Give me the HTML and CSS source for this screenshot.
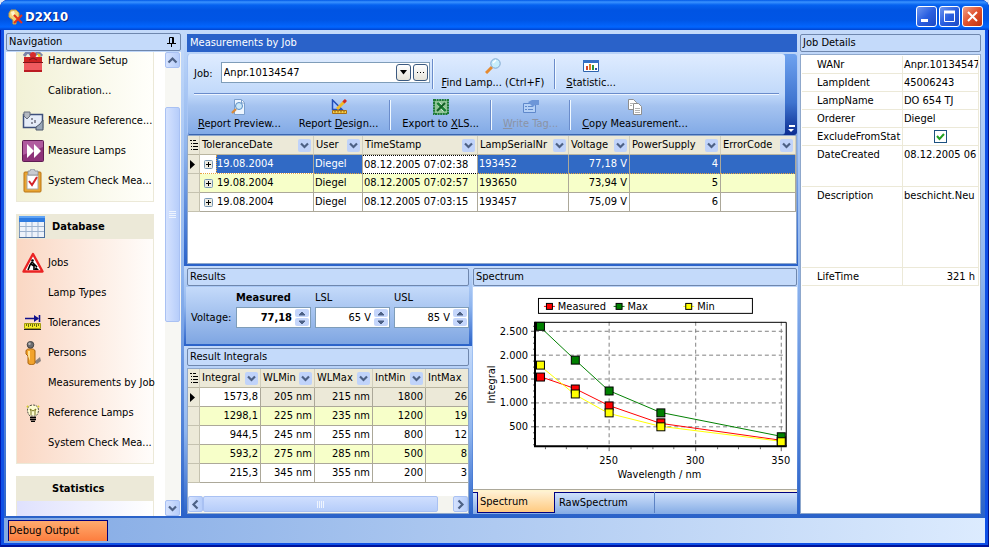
FILE: index.html
```
<!DOCTYPE html>
<html lang="en">
<head>
    <meta charset="UTF-8">
    <meta name="viewport" content="width=device-width, initial-scale=1.0">
    <title>D2X10</title>
    <link rel="stylesheet" href="styles.css">
</head>
<body>
<!-- shared glyphs -->
<svg class="defs" aria-hidden="true">
    <symbol id="chev" viewBox="0 0 13 13"><path d="M3 4.500l3.500 3.500 3.500-3.500" fill="none" stroke="#4d6185" stroke-width="2.200"/></symbol>
    <symbol id="rows" viewBox="0 0 8 10"><path d="M0 .5h2M3 .5h3M1 3.500h1M3 3.500h5M1 6.500h1M3 6.500h5M1 9.500h1M3 9.500h5" stroke="#000"/></symbol>
    <symbol id="expand" viewBox="0 0 9 9"><rect x=".5" y=".5" width="8" height="8" rx="1" fill="#eeece2" stroke="#7898b5"/><path d="M2 4.500h5M4.500 2v5" stroke="#000"/></symbol>
    <symbol id="up" viewBox="0 0 14 9"><path d="M4 6l3-3 3 3z" fill="#4d6185" stroke="#4d6185"/></symbol>
    <symbol id="down" viewBox="0 0 14 9"><path d="M4 3l3 3 3-3z" fill="#4d6185" stroke="#4d6185"/></symbol>
</svg>

<div class="window">
    <header class="titlebar">
        <svg width="16" height="16" viewBox="0 0 16 16">
            <path d="M3 1h5l3 3v4l-3 4v3H5v-4L1 8V4z" fill="#f3d377" stroke="#c89a3a"/>
            <path d="M3 3l3-1 1 3-3 2z" fill="#fff6cf"/>
            <path d="M6 6l8 8M14 6l-8 8" stroke="#e4321b" stroke-width="2"/>
        </svg>
        <h1>D2X10</h1>
        <div class="win-buttons">
            <button aria-label="Minimize"><svg width="19" height="19"><path d="M4 13.500h7" stroke="#fff" stroke-width="3"/></svg></button>
            <button aria-label="Maximize"><svg width="19" height="19"><path d="M4.500 5v9.500h10V5" fill="none" stroke="#fff"/><path d="M4 5h11" stroke="#fff" stroke-width="3"/></svg></button>
            <button class="close" aria-label="Close"><svg width="19" height="19"><path d="M5 5l9 9M14 5l-9 9" stroke="#fff" stroke-width="2"/></svg></button>
        </div>
    </header>

    <div class="workspace">
        <!-- Navigation -->
        <aside class="dock nav">
            <h2 class="caption">Navigation
                <svg width="9" height="10" viewBox="0 0 9 10"><path d="M2.500 6V.5h4V6M5.500 1v5M0 6.500h9M4.500 7v3" fill="none" stroke="#000"/></svg>
            </h2>
            <div class="nav-body">
                <nav class="nav-list">
                    <ul class="group cream first">
                        <li><a href="#"><span class="ico"><svg width="24" height="24" viewBox="0 0 24 24">
                            <path d="M3 7l4-5 4 5M13 7l4-4 4 4" fill="none" stroke="#7c83a8" stroke-width="3"/><circle cx="12" cy="6" r="3" fill="#d72c2c"/><path d="M16 4l4 2-2 3z" fill="#efcb28"/>
                            <path d="M3 8h18v6H3z" fill="#c22"/><path d="M3 13h18v9H3z" fill="#f05a5f"/><path d="M3 21h18v2H3z" fill="#bb1a22"/><path d="M2 13.500h20M8 11l4-2 4 2" fill="none" stroke="#81151a"/></svg></span>Hardware Setup</a></li>
                        <li><a href="#"><span class="ico"></span>Calibration...</a></li>
                        <li><a href="#"><span class="ico"><svg width="24" height="20" viewBox="0 0 24 20">
                            <path d="M2.500 3.500h19v13h-19z" fill="#e5ecf8" stroke="#3d4f7c" stroke-width="1.500"/><path d="M3 1h6v4L6 8 3 5z" fill="#b4b9c2" stroke="#666e7c"/><path d="M11 7v2M14 9v3M10 12h2" stroke="#334"/><path d="M22 9v10h-7v-3l4-3z" fill="#9aa8ba" stroke="#4a566a"/></svg></span>Measure Reference...</a></li>
                        <li><a href="#"><span class="ico"><svg width="22" height="22" viewBox="0 0 22 22">
                            <rect x=".5" y=".5" width="21" height="21" rx="1" fill="#8d3279" stroke="#5f1c52"/><path d="M1 1h20v6L1 15z" fill="#b05b9f"/><path d="M5 4l7 7-7 7zM12 4l7 7-7 7z" fill="#fff"/></svg></span>Measure Lamps</a></li>
                        <li><a href="#"><span class="ico"><svg width="20" height="24" viewBox="0 0 20 24">
                            <rect x="1" y="3" width="17" height="20" rx="1" fill="#e9a532" stroke="#b97514"/><path d="M4 6h11v14H4z" fill="#fff" stroke="#a8a8a8"/><path d="M5 2h2l1-2h3l1 2h3v4H5z" fill="#c8ccd2" stroke="#878d96" stroke-width=".8"/><path d="M6 12l3 4 5-8" fill="none" stroke="#d3242a" stroke-width="2"/></svg></span>System Check Mea...</a></li>
                    </ul>

                    <h3 class="group-head"><svg width="26" height="22" viewBox="0 0 26 22">
                        <path d="M.5.5h25v21H.5z" fill="#edf2fa" stroke="#7c98bd"/><path d="M0 0h26v6H0z" fill="#2f7be0"/><path d="M0 0h26v2H0z" fill="#5fa3f5"/><path d="M1 10.500h24M1 15.500h24M7 6v15M13 6v15M19 6v15" stroke="#9db3cf"/><path d="M0 21.500h26M25.500 6v16" stroke="#4b6f9f"/></svg>Database</h3>
                    <ul class="group peach">
                        <li><a href="#"><span class="ico"><svg width="22" height="21" viewBox="0 0 22 21">
                            <path d="M11 2l9.500 17.500h-19z" fill="#fff" stroke="#ea2323" stroke-width="2.400" stroke-linejoin="round"/><circle cx="10.500" cy="8.500" r="1.300"/><path d="M10 10l-2 3-2 5M9 12l3 2 0 4M10 10l5 5" fill="none" stroke="#000" stroke-width="1.600"/><path d="M12 18l2-3 3 3z"/></svg></span>Jobs</a></li>
                        <li><a href="#"><span class="ico"></span>Lamp Types</a></li>
                        <li><a href="#"><span class="ico"><svg width="17" height="17" viewBox="0 0 17 17">
                            <path d="M1 4.500h13M15.500 1v7" stroke="#10108c" stroke-width="1.600"/><path d="M10 1l5 3.500L10 8z" fill="#10108c"/><path d="M.5 9.500h16v5H.5z" fill="#f5ec2b" stroke="#a59d12"/><path d="M0 15.500h17" stroke="#222"/><path d="M2.500 10v2M4.500 10v3M6.500 10v2M8.500 10v3M10.500 10v2M12.500 10v3M14.500 10v2" stroke="#6d680e"/></svg></span>Tolerances</a></li>
                        <li><a href="#"><span class="ico"><svg width="18" height="24" viewBox="0 0 18 24">
                            <path d="M10 21l6-5 1 4-4 3z" fill="#8b8482"/><path d="M2 10c0-3 9-3 9 0v12c0 2-7 2-7 0v-7l-2-2z" fill="#f2a32d" stroke="#a8620c"/><path d="M4 10v5l2 5V10z" fill="#ffe193"/><circle cx="6.500" cy="3.800" r="3.300" fill="#6c6c70" stroke="#444"/><circle cx="5.500" cy="2.800" r="1.200" fill="#bbb"/></svg></span>Persons</a></li>
                        <li><a href="#"><span class="ico"></span>Measurements by Job</a></li>
                        <li><a href="#"><span class="ico"><svg width="14" height="18" viewBox="0 0 14 18">
                            <path d="M4 12C0 8 .5 1 7 1s7 7 3 11z" fill="#fdfbd2" stroke="#4f4f46" stroke-dasharray="2 1"/><path d="M5 11V7L4 5l3 2 3-2-1 2v4" fill="none" stroke="#77751c"/><path d="M4 13.500h6M4 15.500h6M5 17.500h4" stroke="#000" stroke-width="1.400"/><path d="M2 3l-1-1M12 3l1-1" stroke="#d8d02a" stroke-width="2"/></svg></span>Reference Lamps</a></li>
                        <li><a href="#"><span class="ico"></span>System Check Mea...</a></li>
                    </ul>

                    <h3 class="group-head"><span class="no-icon"></span>Statistics</h3>
                    <ul class="group lilac"><li></li></ul>
                </nav>
                <div class="vscroll">
                    <button aria-label="Scroll up"><svg width="13" height="13"><path d="M2.500 8.500l4-4 4 4" fill="none" stroke="#4d6185" stroke-width="2.200"/></svg></button>
                    <div class="track-before"></div>
                    <div class="thumb"><svg width="7" height="8"><path d="M0 .5h7M0 2.500h7M0 4.500h7M0 6.500h7" stroke="#eef4fe"/></svg></div>
                    <div class="track-after"></div>
                    <button aria-label="Scroll down"><svg width="13" height="13"><use href="#chev"/></svg></button>
                </div>
            </div>
        </aside>

        <main class="center">
            <section class="dock measurements">
                <h2 class="caption active">Measurements by Job</h2>
                <div class="toolbar">
                    <div class="tool-rows">
                        <div class="tool-row">
                            <label for="job">Job:</label>
                            <div class="combo">
                                <input id="job" type="text" value="Anpr.10134547">
                                <button aria-label="Open list"><svg width="9" height="5"><path d="M1 0h7L4.500 4.500z"/></svg></button>
                                <button aria-label="Browse"><svg width="9" height="5"><path d="M1 2.500h1M4 2.500h1M7 2.500h1" stroke="#000"/></svg></button>
                            </div>
                            <span class="sep"></span>
                            <button class="tool"><svg width="16" height="16" viewBox="0 0 16 16"><path d="M1 15l6-6" stroke="#e58a2f" stroke-width="3"/><circle cx="10.500" cy="5.500" r="4.700" fill="#c7eefb" stroke="#7da6cf"/><path d="M8 5l3-3" stroke="#fff" stroke-width="1.500"/></svg><span><u>F</u>ind Lamp... (Ctrl+F)</span></button>
                            <span class="sep"></span>
                            <button class="tool"><svg width="16" height="16" viewBox="0 0 16 16"><path d="M.5 2.500h15v11H.5z" fill="#fff" stroke="#2c62ae"/><path d="M0 2h16v3H0z" fill="#3470c6"/><path d="M4 12V8" stroke="#d3432c" stroke-width="2"/><path d="M7 12V6" stroke="#e47e24" stroke-width="2"/><path d="M10 12V7" stroke="#2c963c" stroke-width="2"/><path d="M13 12v-2" stroke="#2b50a5" stroke-width="2"/></svg><span><u>S</u>tatistic...</span></button>
                        </div>
                        <div class="tool-row second">
                            <button class="tool"><svg width="16" height="16" viewBox="0 0 16 16"><path d="M3.500.5h7l3 3v12h-10z" fill="#eef6ff" stroke="#7b9fcc"/><path d="M10.500 1v3h3" fill="#fff" stroke="#7b9fcc"/><path d="M1 14l4-4" stroke="#d88a3a" stroke-width="2.400"/><circle cx="8" cy="7" r="3.500" fill="#c9e8fa" stroke="#5c8cc2"/></svg><span><u>R</u>eport Preview...</span></button>
                            <button class="tool"><svg width="16" height="16" viewBox="0 0 16 16"><path d="M1.500 1v9.500H11z" fill="#a8c7ff" stroke="#2450b8" stroke-width="1.500"/><path d="M6 10l8-8" stroke="#f0b928" stroke-width="3"/><path d="M12.500 3.500L15 1" stroke="#d02c25" stroke-width="3"/><path d="M1.500 11.500h14v3h-14z" fill="#f8ce45" stroke="#a86e15"/><path d="M4 12v1.500M7 12v1.500M10 12v1.500M13 12v1.500" stroke="#7e520e"/></svg><span>Report <u>D</u>esign...</span></button>
                            <span class="sep"></span>
                            <button class="tool"><svg width="16" height="16" viewBox="0 0 16 16"><path d="M1 1h14v14H1z" fill="#8fc495" stroke="#1e7a35" stroke-width="2" stroke-dasharray="2 .6"/><path d="M4 4l7 8M6 4l7 8" stroke="#fff" stroke-width="2"/><path d="M4 4l8 8M5 4l8 8" stroke="#1a7f32" stroke-width="2"/><path d="M12 4l-8 8" stroke="#125f25" stroke-width="2"/></svg><span>Export to <u>X</u>LS...</span></button>
                            <span class="sep"></span>
                            <button class="tool" disabled><svg width="16" height="16" viewBox="0 0 16 16"><path d="M.5 4.500h12v9H.5z" fill="#b4d0f6" stroke="#5f88cb"/><path d="M2 7.500h2M5 7.500h5M2 10.500h2M5 10.500h5" stroke="#5f88cb"/><path d="M5 3l4-2h7v5h-4l-2 2-3-3z" fill="#6d96d8"/></svg><span><u>W</u>rite Tag...</span></button>
                            <span class="sep"></span>
                            <button class="tool"><svg width="16" height="16" viewBox="0 0 16 16"><path d="M1.500.5h5l3 3v7h-8z" fill="#fff" stroke="#8f8f8f"/><path d="M6.500 4.500h5l3 3v8h-8z" fill="#fff" stroke="#8f8f8f"/><path d="M3 4.500h3M3 6.500h2M8 9.500h5M8 11.500h5M8 13.500h5" stroke="#b3b3b3"/></svg><span><u>C</u>opy Measurement...</span></button>
                        </div>
                    </div>
                    <button class="overflow" aria-label="Toolbar options"><svg width="7" height="8"><path d="M1 1h6" stroke="#fff" stroke-width="2"/><path d="M0 4h6L3 7z" fill="#fff"/></svg></button>
                </div>

                <div class="grid-box top-grid">
                    <table>
                        <colgroup><col class="c-ind"><col class="c-date"><col class="c-user"><col class="c-time"><col class="c-serial"><col class="c-volt"><col class="c-power"><col></colgroup>
                        <thead>
                            <tr>
                                <th><svg width="8" height="10"><use href="#rows"/></svg></th>
                                <th><div>ToleranceDate<button aria-label="Filter ToleranceDate"><svg width="13" height="13"><use href="#chev"/></svg></button></div></th>
                                <th><div>User<button aria-label="Filter User"><svg width="13" height="13"><use href="#chev"/></svg></button></div></th>
                                <th><div>TimeStamp<button aria-label="Filter TimeStamp"><svg width="13" height="13"><use href="#chev"/></svg></button></div></th>
                                <th><div>LampSerialNr<button aria-label="Filter LampSerialNr"><svg width="13" height="13"><use href="#chev"/></svg></button></div></th>
                                <th><div>Voltage<button aria-label="Filter Voltage"><svg width="13" height="13"><use href="#chev"/></svg></button></div></th>
                                <th><div>PowerSupply<button aria-label="Filter PowerSupply"><svg width="13" height="13"><use href="#chev"/></svg></button></div></th>
                                <th><div>ErrorCode<button aria-label="Filter ErrorCode"><svg width="13" height="13"><use href="#chev"/></svg></button></div></th>
                            </tr>
                        </thead>
                        <tbody>
                            <tr class="selected">
                                <td class="ind"><svg width="5" height="9"><path d="M0 0l5 4.500L0 9z"/></svg></td>
                                <td class="date"><div><svg width="9" height="9"><use href="#expand"/></svg><span>19.08.2004</span></div></td><td>Diegel</td><td class="current">08.12.2005 07:02:38</td><td>193452</td><td class="num">77,18 V</td><td class="num">4</td><td></td>
                            </tr>
                            <tr class="odd">
                                <td class="ind"></td>
                                <td class="date"><div><svg width="9" height="9"><use href="#expand"/></svg><span>19.08.2004</span></div></td><td>Diegel</td><td>08.12.2005 07:02:57</td><td>193650</td><td class="num">73,94 V</td><td class="num">5</td><td></td>
                            </tr>
                            <tr>
                                <td class="ind"></td>
                                <td class="date"><div><svg width="9" height="9"><use href="#expand"/></svg><span>19.08.2004</span></div></td><td>Diegel</td><td>08.12.2005 07:03:15</td><td>193457</td><td class="num">75,09 V</td><td class="num">6</td><td></td>
                            </tr>
                        </tbody>
                    </table>
                </div>
            </section>

            <div class="lower">
                <div class="lower-left">
                    <section class="dock results">
                        <h2 class="caption">Results</h2>
                        <div class="result-form">
                            <span></span>
                            <label class="strong" for="measured">Measured</label>
                            <label for="lsl">LSL</label>
                            <label for="usl">USL</label>
                            <span>Voltage:</span>
                            <div class="spin strong"><input id="measured" type="text" value="77,18"><div><button aria-label="Measured up"><svg width="14" height="9"><use href="#up"/></svg></button><button aria-label="Measured down"><svg width="14" height="9"><use href="#down"/></svg></button></div></div>
                            <div class="spin"><input id="lsl" type="text" value="65 V"><div><button aria-label="LSL up"><svg width="14" height="9"><use href="#up"/></svg></button><button aria-label="LSL down"><svg width="14" height="9"><use href="#down"/></svg></button></div></div>
                            <div class="spin"><input id="usl" type="text" value="85 V"><div><button aria-label="USL up"><svg width="14" height="9"><use href="#up"/></svg></button><button aria-label="USL down"><svg width="14" height="9"><use href="#down"/></svg></button></div></div>
                        </div>
                    </section>

                    <section class="dock integrals">
                        <h2 class="caption">Result Integrals</h2>
                        <div class="grid-box">
                            <div class="grid-clip">
                                <table class="int-table">
                                    <colgroup><col class="c-ind"><col class="c-int"><col class="c-wlmin"><col class="c-wlmax"><col class="c-imin"><col></colgroup>
                                    <thead>
                                        <tr>
                                            <th><svg width="8" height="10"><use href="#rows"/></svg></th>
                                            <th><div>Integral<button aria-label="Filter Integral"><svg width="13" height="13"><use href="#chev"/></svg></button></div></th>
                                            <th><div>WLMin<button aria-label="Filter WLMin"><svg width="13" height="13"><use href="#chev"/></svg></button></div></th>
                                            <th><div>WLMax<button aria-label="Filter WLMax"><svg width="13" height="13"><use href="#chev"/></svg></button></div></th>
                                            <th><div>IntMin<button aria-label="Filter IntMin"><svg width="13" height="13"><use href="#chev"/></svg></button></div></th>
                                            <th>IntMax</th>
                                        </tr>
                                    </thead>
                                    <tbody>
                                        <tr class="focus-row"><td class="ind"><svg width="5" height="9"><path d="M0 0l5 4.500L0 9z"/></svg></td><td class="white">1573,8</td><td>205 nm</td><td>215 nm</td><td>1800</td><td>26</td></tr>
                                        <tr class="odd"><td class="ind"></td><td>1298,1</td><td>225 nm</td><td>235 nm</td><td>1200</td><td>19</td></tr>
                                        <tr><td class="ind"></td><td>944,5</td><td>245 nm</td><td>255 nm</td><td>800</td><td>12</td></tr>
                                        <tr class="odd"><td class="ind"></td><td>593,2</td><td>275 nm</td><td>285 nm</td><td>500</td><td>8</td></tr>
                                        <tr><td class="ind"></td><td>215,3</td><td>345 nm</td><td>355 nm</td><td>200</td><td>3</td></tr>
                                    </tbody>
                                </table>
                            </div>
                            <div class="hscroll">
                                <button aria-label="Scroll left"><svg width="13" height="13"><path d="M8.500 2.500l-4 4 4 4" fill="none" stroke="#4d6185" stroke-width="2.200"/></svg></button>
                                <div class="thumb"><svg width="8" height="7"><path d="M.5 0v7M2.500 0v7M4.500 0v7M6.500 0v7" stroke="#eef4fe"/></svg></div>
                                <div class="track"></div>
                                <button aria-label="Scroll right"><svg width="13" height="13"><path d="M4.500 2.500l4 4-4 4" fill="none" stroke="#4d6185" stroke-width="2.200"/></svg></button>
                            </div>
                        </div>
                    </section>
                </div>

                <section class="dock spectrum">
                    <h2 class="caption">Spectrum</h2>
                    <div class="chart">
                        <svg viewBox="0 0 323 203" role="img" aria-label="Spectrum chart">
                            <rect x="64.500" y="11.500" width="215" height="15" fill="#fff" stroke="#000"/>
                            <g stroke="#000">
                                <path d="M70 19.500h11" stroke="#f00"/><rect x="72.500" y="16.500" width="6" height="6" fill="#f00"/>
                                <path d="M140 19.500h11" stroke="#008000"/><rect x="142.500" y="16.500" width="6" height="6" fill="#008000"/>
                                <path d="M210 19.500h11" stroke="#ff0"/><rect x="212.500" y="16.500" width="6" height="6" fill="#ff0"/>
                            </g>
                            <text x="84" y="23">Measured</text>
                            <text x="154" y="23">Max</text>
                            <text x="224" y="23">Min</text>

                            <path d="M61 44.500h252M61 68.500h252M61 92.500h252M61 116.500h252M61 140.500h252M135.500 35v125M222.500 35v125M308.500 35v125" stroke="#808080" stroke-dasharray="4 3"/>
                            <path d="M57 44.500h4M57 68.500h4M57 92.500h4M57 116.500h4M57 140.500h4M135.500 161v4M222.500 161v4M308.500 161v4M59 39.500h2M59 50.500h2M59 56.500h2M59 62.500h2M59 74.500h2M59 80.500h2M59 86.500h2M59 98.500h2M59 104.500h2M59 110.500h2M59 122.500h2M59 128.500h2M59 134.500h2M59 146.500h2M59 152.500h2M59 158.500h2M71.500 161v2M92.500 161v2M113.500 161v2M157.500 161v2M179.500 161v2M200.500 161v2M244.500 161v2M265.500 161v2M287.500 161v2" stroke="#606060"/>
                            <path d="M61 35.500h252.500V160" fill="none" stroke="#000"/>
                            <path d="M61 35v125h253" fill="none" stroke="#000" stroke-width="2"/>

                            <g fill="none">
                                <path d="M66 90l35 12 34 17 52 18 121 17" stroke="#f00"/>
                                <path d="M66 40l35 33 34 31 52 22 121 24" stroke="#008000"/>
                                <path d="M66 79l35 29 34 19 52 13 121 15" stroke="#ff0"/>
                            </g>
                            <g fill="#f00" stroke="#000">
                                <rect x="62.500" y="86.500" width="8" height="8"/><rect x="97.500" y="98.500" width="8" height="8"/><rect x="131.500" y="115.500" width="8" height="8"/><rect x="183.500" y="132.500" width="8" height="8"/><rect x="304.500" y="150.500" width="8" height="8"/>
                            </g>
                            <g fill="#008000" stroke="#000">
                                <rect x="62.500" y="35.500" width="8" height="8"/><rect x="97.500" y="69.500" width="8" height="8"/><rect x="131.500" y="100.500" width="8" height="8"/><rect x="183.500" y="122.500" width="8" height="8"/><rect x="304.500" y="146.500" width="8" height="8"/>
                            </g>
                            <g fill="#ff0" stroke="#000">
                                <rect x="62.500" y="74.500" width="8" height="8"/><rect x="97.500" y="103.500" width="8" height="8"/><rect x="131.500" y="122.500" width="8" height="8"/><rect x="183.500" y="136.500" width="8" height="8"/><rect x="304.500" y="151.500" width="8" height="8"/>
                            </g>

                            <g text-anchor="end">
                                <text x="54" y="48">2.500</text><text x="54" y="72">2.000</text><text x="54" y="96">1.500</text><text x="54" y="120">1.000</text><text x="54" y="144">500</text>
                            </g>
                            <g text-anchor="middle">
                                <text x="135" y="178">250</text><text x="222" y="178">300</text><text x="308" y="178">350</text>
                                <text x="186" y="192">Wavelength / nm</text>
                                <text transform="translate(21 98) rotate(-90)">Integral</text>
                            </g>
                        </svg>
                    </div>
                    <div class="tabs" role="tablist">
                        <button class="active" role="tab" aria-selected="true">Spectrum</button>
                        <button role="tab" aria-selected="false">RawSpectrum</button>
                    </div>
                </section>
            </div>
        </main>

        <!-- Job Details -->
        <aside class="dock details">
            <h2 class="caption">Job Details</h2>
            <div class="props">
                <table>
                    <colgroup><col class="c-name"><col></colgroup>
                    <tr><th scope="row">WANr</th><td>Anpr.10134547</td></tr>
                    <tr><th scope="row">LampIdent</th><td>45006243</td></tr>
                    <tr><th scope="row">LampName</th><td>DO 654 TJ</td></tr>
                    <tr><th scope="row">Orderer</th><td>Diegel</td></tr>
                    <tr><th scope="row"><label for="exclude">ExcludeFromStat</label></th><td class="check"><input id="exclude" type="checkbox" checked></td></tr>
                    <tr class="mid"><th scope="row">DateCreated</th><td>08.12.2005 06</td></tr>
                    <tr class="tall"><th scope="row">Description</th><td>beschicht.Neu</td></tr>
                    <tr><th scope="row">LifeTime</th><td class="num">321 h</td></tr>
                </table>
            </div>
        </aside>
    </div>

    <footer class="statusbar"><button>Debug Output</button></footer>
</div>
</body>
</html>
```
FILE: styles.css
```
* {
    box-sizing: border-box;
}

body {
    margin: 0;
    background: #dfe9f8;
    font: 11px/14px Tahoma, "DejaVu Sans Condensed", "Liberation Sans", sans-serif;
    color: #000;
}

h1, h2, h3, ul {
    margin: 0;
    padding: 0;
    font-size: 11px;
}

ul {
    list-style: none;
}

a {
    color: inherit;
    text-decoration: none;
}

button, input {
    margin: 0;
    padding: 0;
    border: 0;
    font: inherit;
    color: inherit;
    background: none;
}

svg {
    display: block;
    flex: none;
}

.defs {
    display: none;
}

/* Window frame */
.window {
    display: flex;
    flex-direction: column;
    height: 100vh;
    min-height: 540px;
    padding: 0 4px 4px;
    border-radius: 8px 8px 0 0;
    background: #0f50e6;
    box-shadow: inset 1px 0 #0019b0, inset -1px 0 #00138c, inset 0 -2px #00139a;
    overflow: hidden;
}

.titlebar {
    flex: none;
    display: flex;
    align-items: center;
    gap: 1px;
    height: 30px;
    margin: 0 -4px;
    padding: 3px 6px 0 8px;
    background: linear-gradient(#0058e6 0, #3a93ff 2px, #0562f0 5px, #0054e3 10px, #0055e5 20px, #0266ff 27px, #0043cf 30px);
}

.titlebar h1 {
    flex: 1;
    font: bold 13px/16px "Trebuchet MS", "DejaVu Sans Condensed", sans-serif;
    color: #fff;
    text-shadow: 1px 1px #0a1f7a;
}

.win-buttons {
    display: flex;
    gap: 2px;
}

.win-buttons button {
    width: 21px;
    height: 21px;
    border: 1px solid #fff;
    border-radius: 3px;
    background: linear-gradient(135deg, #6e96f0, #2a5fe0 50%, #1c49c4);
}

.win-buttons .close {
    background: linear-gradient(135deg, #f0a088, #e0502c 50%, #bf3311);
}

/* Docked panels */
.workspace {
    flex: 1;
    min-height: 0;
    display: grid;
    grid-template-columns: 180px minmax(0, 1fr) 187px;
    background: #c4dafa;
}

.dock {
    display: flex;
    flex-direction: column;
    min-width: 0;
    min-height: 0;
    background: linear-gradient(#c4dafa, #8fb5ee 50%, #2a62c9);
}

.caption {
    flex: none;
    display: flex;
    align-items: center;
    justify-content: space-between;
    height: 18px;
    padding: 0 4px 0 2px;
    border: 1px solid #6f87ad;
    border-radius: 2px;
    background: #c4dafa;
    font-weight: normal;
}

.caption.active {
    border-color: #2a62c9;
    border-radius: 0;
    background: #2a62c9;
    color: #fff;
}

/* Navigation */
.nav {
    padding: 3px 3px 0 2px;
}

.nav-body {
    flex: 1;
    min-height: 0;
    display: flex;
    margin-top: 1px;
    border-bottom: 1px solid #2a62c9;
    background: #fff;
}

.nav-list {
    flex: 1;
    min-width: 0;
    padding: 0 11px 0 10px;
    overflow: hidden;
}

.group {
    margin-bottom: 12px;
    padding: 8px 0 6px;
    border: 1px solid #ece9d8;
    border-top: 0;
    white-space: nowrap;
}

.group.first {
    margin-top: -7px;
    padding-top: 0;
}

.cream {
    background: linear-gradient(90deg, #f2f1d6, #fffffb);
}

.peach {
    background: linear-gradient(90deg, #fad7c3, #fffdfb);
}

.lilac {
    background: linear-gradient(90deg, #dfe1fd, #fff);
}

.group li, .group a {
    display: flex;
    align-items: center;
    height: 30px;
}

.group a {
    padding-top: 1px;
}

.ico {
    flex: none;
    display: flex;
    align-items: center;
    justify-content: center;
    width: 31px;
}

.group-head {
    display: flex;
    align-items: center;
    gap: 7px;
    height: 25px;
    padding-left: 3px;
    background: #ece9d8;
}

.no-icon {
    width: 26px;
}

/* Scroll bars */
.vscroll {
    flex: none;
    display: flex;
    flex-direction: column;
    width: 16px;
    background: #f7f7f3;
}

.vscroll button, .hscroll button, .thumb {
    flex: none;
    display: flex;
    align-items: center;
    justify-content: center;
    width: 15px;
    height: 16px;
    border: 1px solid #a9c1f3;
    border-radius: 2px;
    background: linear-gradient(90deg, #d5e2fe, #b6cdfa);
}

.vscroll .thumb {
    flex: 54;
    height: auto;
}

.track-before {
    flex: 10;
}

.track-after {
    flex: 45;
}

.hscroll {
    flex: none;
    display: flex;
    height: 17px;
    background: #f4f4ef;
}

.hscroll .thumb {
    flex: 1;
    background: linear-gradient(#d0dffe, #b6cdfa);
}

.hscroll .track {
    width: 15px;
}

/* Center column */
.center {
    display: flex;
    flex-direction: column;
    min-height: 0;
}

.measurements {
    flex: none;
    padding: 4px 1px 2px 3px;
}

.toolbar {
    display: flex;
    margin-top: 2px;
    background: linear-gradient(#6ea2ef, #3f74cf 60%, #0b2d91);
    border-radius: 3px;
    border-left: 1px solid #a9c6f5;
    overflow: hidden;
}

.tool-rows {
    flex: 1;
    min-width: 0;
    padding: 0 6px;
    border-bottom: 1px solid #3a66b0;
    border-radius: 0 3px 3px 0;
    background: linear-gradient(#dfecff, #c1d9fa 50%, #a5c3f0 65%, #82aae6);
}

.tool-row {
    display: flex;
    align-items: center;
    height: 40px;
    border-bottom: 1px solid #6a8ccb;
}

.tool-row.second {
    border-bottom: 0;
    border-top: 1px solid #eef5ff;
}

.tool {
    display: flex;
    flex-direction: column;
    align-items: center;
    gap: 2px;
    padding: 0 8px 0 4px;
    white-space: nowrap;
}

.tool:last-child {
    padding-left: 6px;
}

.second .tool {
    padding: 0 9px;
}

.second .tool:first-child {
    padding-left: 4px;
}

.second .sep {
    margin: 0 2px;
}

.tool:disabled {
    color: #8b93a5;
}

.sep {
    width: 2px;
    height: 30px;
    margin: 0 4px 0 2px;
    border-left: 1px solid #6a8ccb;
    border-right: 1px solid #f1f9ff;
}

.combo {
    display: flex;
    align-items: center;
    width: 209px;
    height: 21px;
    margin: 0 0 2px 8px;
    padding: 0 1px 0 2px;
    border: 1px solid #7f9db9;
    background: #fff;
}

.combo input {
    flex: 1;
    min-width: 0;
}

.combo button {
    display: flex;
    align-items: center;
    justify-content: center;
    width: 15px;
    height: 17px;
    margin-left: 2px;
    border: 1px solid #3c5a80;
    border-radius: 3px;
    background: linear-gradient(#fff, #e6e4da);
}

.overflow {
    display: flex;
    flex-direction: column;
    align-items: center;
    justify-content: flex-end;
    width: 12px;
    padding-bottom: 2px;
}

/* Data grids */
.grid-box {
    display: flex;
    flex-direction: column;
    background: #fff;
    border: 1px solid #8fa8cc;
}

.top-grid {
    height: 129px;
}

.grid-box table {
    width: 100%;
    table-layout: fixed;
    border-collapse: separate;
    border-spacing: 0;
}

.c-ind { width: 12px; }
.c-date { width: 114px; }
.c-user { width: 49px; }
.c-time { width: 115px; }
.c-serial { width: 91px; }
.c-volt { width: 61px; }
.c-power { width: 91px; }
.c-int { width: 61px; }
.c-wlmin { width: 54px; }
.c-wlmax { width: 58px; }
.c-imin { width: 53px; }

.grid-box th {
    height: 19px;
    padding: 0 2px;
    border-right: 1px solid #d2cfbd;
    border-bottom: 1px solid #b9b5a0;
    background: #ece9d8;
    font-weight: normal;
    text-align: left;
}

.grid-box th div {
    display: flex;
    align-items: center;
    justify-content: space-between;
}

.grid-box th button {
    width: 13px;
    height: 13px;
    border-radius: 2px;
    background: #c0d3fa;
}

.grid-box td {
    height: 19px;
    padding: 0 2px 0 1px;
    border-right: 1px solid #aca899;
    border-bottom: 1px solid #aca899;
    white-space: nowrap;
}

.grid-box .ind {
    padding: 0 2px;
    background: #ece9d8;
    border-color: #c5c2b0;
}

.num, .int-table td {
    text-align: right;
}

.int-table th:last-child, .int-table td:last-child {
    padding-right: 1px;
    border-right: 0;
}

.date div {
    display: flex;
    align-items: center;
    height: 18px;
    padding-left: 3px;
}

.date span {
    flex: 1;
    margin: 0 -2px 0 3px;
    padding-left: 1px;
    line-height: 18px;
}

.selected td, .selected .date span {
    background: #316ac5;
    color: #fff;
    border-bottom: 1px dotted #e8a33d;
}

.selected .date span {
    height: 18px;
    border-bottom: 0;
    border-left: 1px dotted #e8a33d;
    padding-left: 0;
}

.selected .date {
    background: #fff;
}

.selected .ind {
    background: #ece9d8;
    border-bottom: 1px solid #c5c2b0;
}

.selected .current {
    background: #fff;
    color: #000;
    border-top: 1px dotted #000;
    border-bottom: 1px dotted #000;
}

.odd td {
    background: #f7ffc9;
}

.focus-row td {
    background: #ece9d8;
}

.focus-row .white {
    background: #fff;
}

.odd .ind {
    background: #ece9d8;
}

/* Lower half */
.lower {
    flex: 1;
    min-height: 0;
    display: grid;
    grid-template-columns: 288px minmax(0, 1fr);
}

.lower-left {
    display: flex;
    flex-direction: column;
    min-height: 0;
}

.results {
    padding: 2px 3px 2px 2px;
}

.results .caption, .integrals .caption {
    margin-left: 1px;
}

.result-form {
    display: grid;
    grid-template-columns: 41px 75px 75px 75px;
    column-gap: 4px;
    align-items: center;
    height: 57px;
    margin-top: 1px;
    padding: 3px 0 15px 5px;
    background: linear-gradient(#c4dafa, #7fa6e2);
    overflow: hidden;
}

.strong {
    font-weight: bold;
}

.spin {
    display: flex;
    height: 21px;
    padding: 1px;
    border: 1px solid #7f9db9;
    background: #fff;
}

.spin input {
    flex: 1;
    min-width: 0;
    padding-right: 3px;
    text-align: right;
}

.spin button {
    display: block;
    height: 8px;
    margin-bottom: 1px;
    border-radius: 2px;
    background: #c5d6fb;
    overflow: hidden;
}

.integrals {
    flex: 1;
    padding: 2px 3px 3px 2px;
}

.integrals .grid-box {
    flex: 1;
    min-height: 0;
    margin: 2px 0 0 1px;
}

.grid-clip {
    flex: 1;
    overflow: hidden;
}

.spectrum {
    padding: 2px 1px 3px;
}

.chart {
    flex: 1;
    min-height: 0;
    margin-top: 1px;
    border-bottom: 1px solid #aca899;
    background: #fff;
}

.chart svg {
    width: 100%;
    height: 100%;
}

.chart text {
    font-size: 11px;
}

.tabs {
    flex: none;
    display: flex;
    height: 24px;
    padding: 0 4px 1px;
    border-top: 2px solid #fff3cf;
    background: linear-gradient(#000080 1px, #cfe1fb 1px, #84abe5);
}

.tabs button {
    padding: 0 26px 0 4px;
    border-right: 1px solid #5c82c4;
    text-align: left;
}

.tabs .active {
    border: 1px solid #000080;
    border-top: 0;
    padding-left: 2px;
    background: linear-gradient(#fff0d2, #ffca80);
}

/* Job details */
.details {
    padding: 4px 4px 3px 2px;
}

.props {
    flex: 1;
    min-height: 0;
    margin-top: 2px;
    padding: 1px;
    border: 1px solid #8fa8cc;
    background: #fff;
}

.props table {
    width: 100%;
    table-layout: fixed;
    border-collapse: separate;
    border-spacing: 0;
}

.c-name {
    width: 101px;
}

.props th, .props td {
    height: 18px;
    padding: 2px 0 0 1px;
    border-right: 1px solid #ece9d8;
    border-bottom: 1px solid #ece9d8;
    font-weight: normal;
    text-align: left;
    vertical-align: top;
    white-space: nowrap;
    overflow: hidden;
}

.props th {
    padding-left: 15px;
}

.props .mid > * {
    height: 41px;
}

.props .tall > * {
    height: 81px;
}

.props .num {
    padding-right: 3px;
    text-align: right;
}

.props .check {
    padding: 2px 0 0 31px;
}

.check input {
    appearance: none;
    display: block;
    width: 13px;
    height: 13px;
    border: 1px solid #1c5180;
    background: #fff url("data:image/svg+xml,%3Csvg xmlns='http://www.w3.org/2000/svg' viewBox='0 0 11 11'%3E%3Cpath d='M2 5l2.500 3L9 3' fill='none' stroke='%2321a121' stroke-width='2'/%3E%3C/svg%3E");
}

/* Status bar */
.statusbar {
    flex: none;
    display: flex;
    height: 26px;
    padding: 2px 4px;
    border-top: 1px solid #2a62c9;
    background: linear-gradient(90deg, #82a9e4, #dcebfe);
}

.statusbar button {
    width: 100px;
    border: 1px solid #000080;
    border-bottom: 0;
    background: linear-gradient(#ffab6e, #fd7d3e);
    text-align: left;
}
```
